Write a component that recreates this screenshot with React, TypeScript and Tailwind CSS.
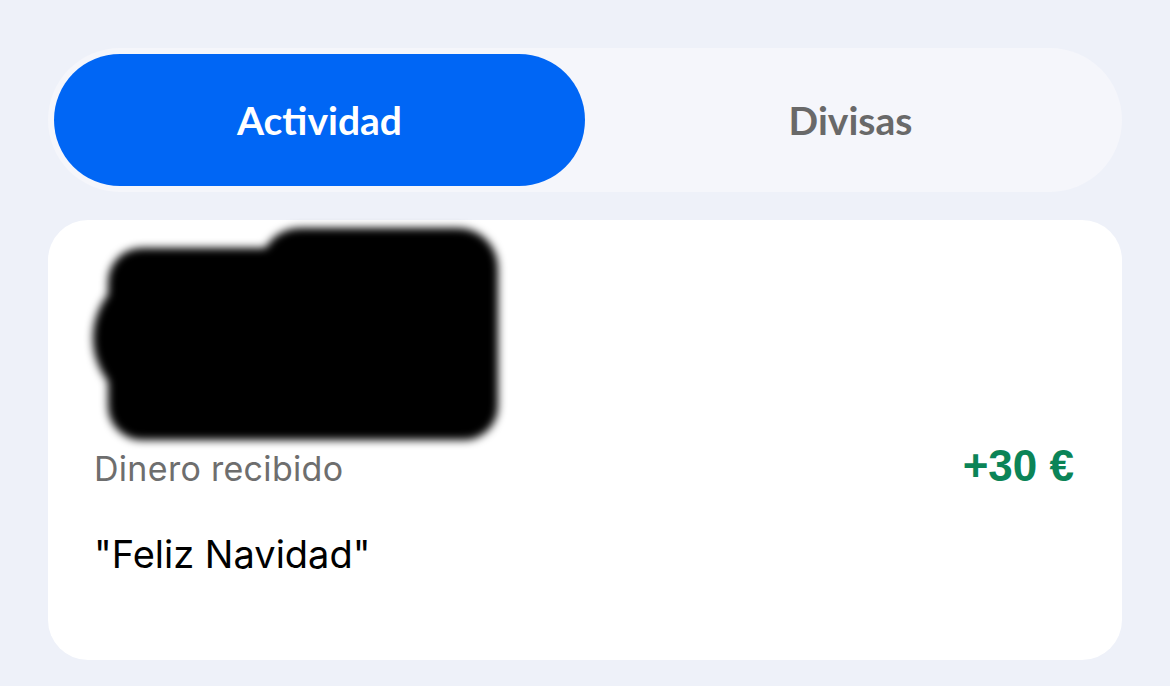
import React from "react"

export default function App() {
  return (
    <div className="h-[686px] w-full bg-[#eef1f9] px-[48px] pt-[48px] font-['Inter',sans-serif]">
      {/* Tabs */}
      <div className="grid h-[144px] grid-cols-2 rounded-full bg-[#f5f6fb] p-[6px]">
        <div className="flex items-center justify-center rounded-full bg-[#0066f5]">
          <span className="font-['Lato',sans-serif] text-[39px] font-bold text-white">
            Actividad
          </span>
        </div>
        <div className="flex items-center justify-center">
          <span className="font-['Lato',sans-serif] text-[39px] font-bold text-[#696969]">
            Divisas
          </span>
        </div>
      </div>

      {/* Transaction card */}
      <div className="mt-[28px] h-[440px] rounded-[40px] bg-white px-[46px]">
        {/* Redacted avatar + name */}
        <div className="relative h-[226px]">
          <div className="absolute inset-0 blur-[4px]">
            <div className="absolute left-[-1px] top-[48px] h-[140px] w-[140px] rounded-full bg-black" />
            <div className="absolute left-[14px] top-[28px] h-[192px] w-[390px] rounded-[34px] bg-black" />
            <div className="absolute left-[166px] top-[8px] h-[160px] w-[238px] rounded-[40px] bg-black" />
          </div>
        </div>

        <div className="flex items-baseline justify-between pr-[2px]">
          <span className="text-[34px] leading-[40px] tracking-[0.3px] text-[#6e6e6e]">Dinero recibido</span>
          <span className="font-['Liberation_Sans',sans-serif] text-[44px] font-bold leading-[40px] text-[#0b8457]">
            +30 €
          </span>
        </div>

        <p className="mt-[42px] text-[38px] leading-[46px] text-black">"Feliz Navidad"</p>
      </div>
    </div>
  )
}
